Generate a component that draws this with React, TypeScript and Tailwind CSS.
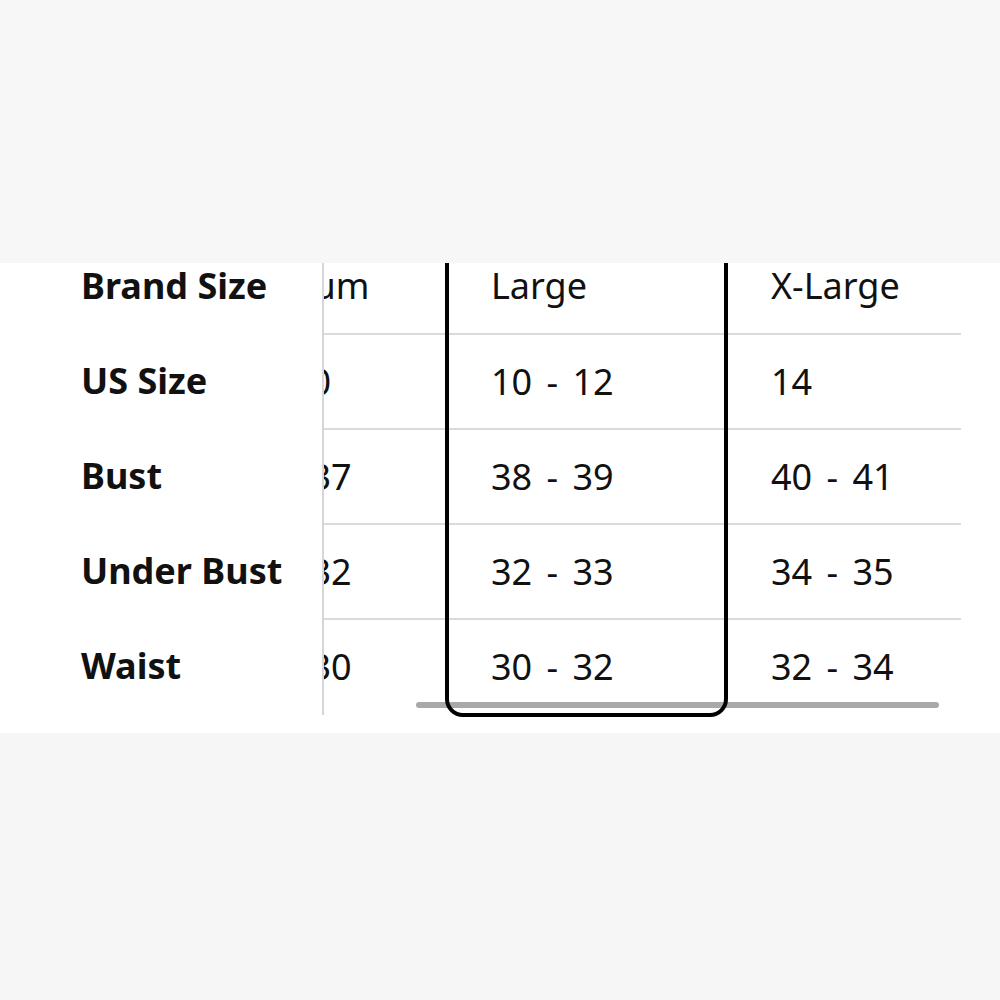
import React from 'react';

type SizeColumn = {
  name: string;
  values: string[];
  width: string;
  selected?: boolean;
};

const labels = ['Brand Size', 'US Size', 'Bust', 'Under Bust', 'Waist'];

const columns: SizeColumn[] = [
  { name: 'Medium', values: ['8 - 10', '36 - 37', '30 - 32', '28 - 30'], width: 'w-[259px]' },
  { name: 'Large', values: ['10 - 12', '38 - 39', '32 - 33', '30 - 32'], width: 'w-[283px]', selected: true },
  { name: 'X-Large', values: ['14', '40 - 41', '34 - 35', '32 - 34'], width: 'w-[280px]' },
  { name: 'XX-Large', values: ['16', '42 - 43', '36 - 37', '34 - 36'], width: 'w-[280px]' },
];

const Cell: React.FC<{ text: string; first?: boolean; inset?: boolean }> = ({ text, first, inset }) => (
  <div
    className={`h-[95px] flex items-center whitespace-nowrap ${inset ? 'pl-[42px]' : 'pl-[43px]'} ${
      first ? '' : 'border-t-2 border-[#dadada]'
    }`}
  >
    {text}
  </div>
);

export default function App() {
  return (
    <div
      className="w-[1000px] h-[1000px] flex flex-col bg-[#f7f7f7] text-[#111111]"
      style={{ fontFamily: '"Noto Sans", "Open Sans", Arial, sans-serif' }}
    >
      <div className="h-[263px] bg-[#f7f7f7]" />

      {/* size chart panel, scrolled so the first row is partly hidden */}
      <div className="relative h-[470px] bg-white overflow-hidden">
        <div className="flex mt-[-25px]">
          {/* sticky label column */}
          <div className="w-[324px] shrink-0 border-r-2 border-[#d6d6d6] h-[477px]">
            {labels.map((label) => (
              <div key={label} className="h-[95px] flex items-center pl-[81px] text-[36px] font-bold">
                {label}
              </div>
            ))}
          </div>

          {/* horizontally scrolled size columns */}
          <div className="w-[637px] shrink-0 overflow-hidden">
            <div className="flex ml-[-138px] text-[36px] [word-spacing:5px]">
              {columns.map((col) => (
                <div
                  key={col.name}
                  className={`${col.width} shrink-0 ${
                    col.selected ? 'relative z-10 border-4 border-black rounded-[18px] mt-[-4px] h-[483px]' : ''
                  }`}
                >
                  <Cell text={col.name} first inset={col.selected} />
                  {col.values.map((v, i) => (
                    <Cell key={i} text={v} inset={col.selected} />
                  ))}
                </div>
              ))}
            </div>
          </div>
        </div>

        {/* overlay scrollbar */}
        <div className="absolute top-[439px] left-[416px] w-[523px] h-[6px] rounded-full bg-[#a9a9a9]" />
      </div>

      <div className="flex-1 bg-[#f6f6f6]" />
    </div>
  );
}
